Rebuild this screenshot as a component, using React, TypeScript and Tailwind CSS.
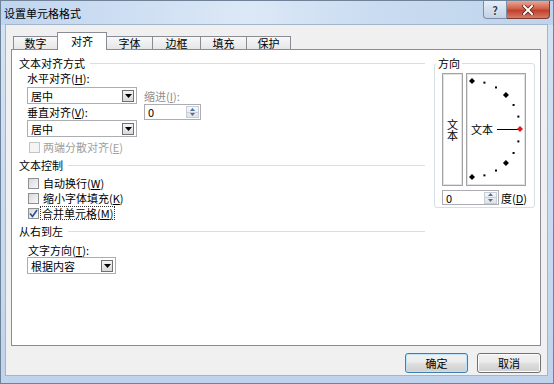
import React from "react";

const FONT = "font-['Noto_Sans_CJK_SC','Noto_Sans',sans-serif]";

function U({ c }: { c: string }) {
  return <span className="underline decoration-1 underline-offset-[1px]">{c}</span>;
}

function DropBtn() {
  return (
    <div className="mr-[2px] flex h-[12px] w-[12px] items-center justify-center border border-[#707070] bg-[linear-gradient(#f4f4f4,#d9d9d9)]">
      <svg width="7" height="4" viewBox="0 0 7 4">
        <path d="M0 0H7L3.5 4Z" fill="#000" />
      </svg>
    </div>
  );
}

function Combo({ text, cls }: { text: string; cls: string }) {
  return (
    <div className={`flex h-[17px] items-center border border-[#abadb3] bg-white ${cls}`}>
      <span className="flex-1 pl-[3px] text-[11px] leading-[14px] text-black">{text}</span>
      <DropBtn />
    </div>
  );
}

function SpinBtns() {
  return (
    <div className="mr-[1px] flex h-[12px] w-[13px] flex-col border border-[#c9ced6] bg-[linear-gradient(#f6f7f9,#dfe3e8)]">
      <div className="flex flex-1 items-center justify-center border-b border-[#c9ced6]">
        <svg width="5" height="3" viewBox="0 0 5 3">
          <path d="M0 3H5L2.5 0Z" fill="#4f6f9f" />
        </svg>
      </div>
      <div className="flex flex-1 items-center justify-center">
        <svg width="5" height="3" viewBox="0 0 5 3">
          <path d="M0 0H5L2.5 3Z" fill="#4f6f9f" />
        </svg>
      </div>
    </div>
  );
}

function Spin({ cls, h }: { cls: string; h: string }) {
  return (
    <div className={`flex items-center border border-[#abadb3] bg-white ${cls} ${h}`}>
      <span className="flex-1 pl-[3px] text-[11px] leading-[14px] text-black">0</span>
      <SpinBtns />
    </div>
  );
}

function Box({ checked, disabled }: { checked?: boolean; disabled?: boolean }) {
  return (
    <div
      className={`flex h-[11px] w-[11px] items-center justify-center border ${
        disabled
          ? "border-[#c4c4c4] bg-[#f4f4f4]"
          : "border-[#8e8f8f] bg-[linear-gradient(135deg,#d6d9de,#f9f9f9)]"
      }`}
    >
      {checked && (
        <svg width="9" height="9" viewBox="0 0 9 9">
          <path d="M1 4.5L3.5 7.5L8 1" stroke="#2b4f8e" strokeWidth="1.6" fill="none" />
        </svg>
      )}
    </div>
  );
}

function Header({ text, mt }: { text: string; mt: string }) {
  return (
    <div className={`flex h-[14px] items-center ${mt}`}>
      <span className="text-[11px] leading-[14px] text-black">{text}</span>
      <div className="ml-[5px] mt-[1px] h-px flex-1 bg-[#d5dfe5]" />
    </div>
  );
}

function Semicircle() {
  const els: React.ReactNode[] = [];
  for (let a = -90; a <= 90; a += 15) {
    const r = (a * Math.PI) / 180;
    const x = 5 + 48 * Math.cos(r);
    const y = 55 - 48 * Math.sin(r);
    const big = a % 45 === 0;
    if (big) {
      els.push(
        <polygon
          key={a}
          points={`${x},${y - 3} ${x + 3},${y} ${x},${y + 3} ${x - 3},${y}`}
          fill={a === 0 ? "#e01818" : "#000"}
        />
      );
    } else {
      els.push(<rect key={a} x={x - 1} y={y - 1} width="2" height="2" fill="#000" />);
    }
  }
  return (
    <svg className="absolute left-0 top-0" width="58" height="111" viewBox="0 0 58 111">
      <line x1="30" y1="55.5" x2="51" y2="55.5" stroke="#000" strokeWidth="1" />
      {els}
    </svg>
  );
}

export default function App() {
  const tabs = [
    { t: "数字", w: "w-[44px]" },
    { t: "对齐", w: "w-[50px]", sel: true },
    { t: "字体", w: "w-[45px]" },
    { t: "边框", w: "w-[48px]" },
    { t: "填充", w: "w-[46px]" },
    { t: "保护", w: "w-[45px]", last: true },
  ];

  return (
    <div
      className={`flex h-[384px] w-[554px] flex-col border border-[#6f8298] bg-[linear-gradient(to_bottom,#d4e4f6,#bfd4ec)] ${FONT} text-black`}
    >
      {/* Title bar */}
      <div className="flex h-[24px] items-start justify-between bg-[linear-gradient(to_right,#c0d5ee,#dbe8f7_45%,#c8dbf0_70%,#bfd4ec)]">
        <span className="ml-[3px] mt-[5px] text-[11px] leading-[14px] text-black">设置单元格格式</span>
        <div className="mr-[3px] flex">
          <div className="flex h-[18px] w-[24px] items-center justify-center rounded-bl-[4px] border border-t-0 border-[#7c8ea6] bg-[linear-gradient(#e6edf6,#c3d2e4)]">
            <span className="text-[11px] font-bold leading-[12px] text-[#33445c] [text-shadow:0_0_2px_#fff]">?</span>
          </div>
          <div className="flex h-[18px] w-[43px] items-center justify-center rounded-br-[4px] border border-l-0 border-t-0 border-[#7a3a30] bg-[linear-gradient(#e9a896,#d0604a_45%,#c0402c_55%,#d77c66)]">
            <svg width="12" height="10" viewBox="0 0 12 10">
              <path d="M2 1L10 9M10 1L2 9" stroke="#5a2018" strokeWidth="3.6" strokeLinecap="square" />
              <path d="M2 1L10 9M10 1L2 9" stroke="#fff" strokeWidth="2" strokeLinecap="square" />
            </svg>
          </div>
        </div>
      </div>

      {/* Client area */}
      <div className="ml-[5px] flex h-[350px] w-[541px] flex-col bg-[#f0f0f0] pt-[7px] shadow-[0_0_0_1px_#a2b5ca]">
        {/* Tabs */}
        <div className="relative z-10 flex h-[17px] items-end pl-[7px]">
          {tabs.map((tb) =>
            tb.sel ? (
              <div
                key={tb.t}
                className={`${tb.w} -mb-px flex h-[18px] items-center justify-center border border-b-0 border-[#898c95] bg-white pb-[1px]`}
              >
                <span className="text-[11px] leading-[14px]">{tb.t}</span>
              </div>
            ) : (
              <div
                key={tb.t}
                className={`${tb.w} flex h-[13px] items-center justify-center border-t border-[#898c95] bg-[linear-gradient(#f8f8f8,#e6e6e6)] ${
                  tb.t === "数字" ? "border-l" : ""
                } ${tb.t === "字体" ? "" : tb.t !== "数字" ? "border-l" : ""} ${tb.last ? "border-r" : ""}`}
              >
                <span className="text-[11px] leading-[13px]">{tb.t}</span>
              </div>
            )
          )}
        </div>

        {/* Panel */}
        <div className="ml-[5px] flex h-[297px] w-[530px] items-start border border-[#898c95] bg-white pl-[7px]">
          {/* Left column */}
          <div className="flex w-[406px] flex-col">
            <Header text="文本对齐方式" mt="mt-[6px]" />
            <div className="ml-[8px] mt-[1px] h-[14px] text-[11px] leading-[14px]">
              水平对齐(<U c="H" />):
            </div>
            <div className="ml-[8px] mt-[2px] flex">
              <div className="flex flex-col">
                <Combo text="居中" cls="w-[110px]" />
                <div className="mt-[1px] h-[14px] text-[11px] leading-[14px]">
                  垂直对齐(<U c="V" />):
                </div>
                <Combo text="居中" cls="mt-[1px] w-[110px]" />
              </div>
              <div className="ml-[7px] flex flex-col">
                <div className="mt-[2px] h-[14px] text-[11px] leading-[14px] text-[#8d8d8d]">
                  缩进(<U c="I" />):
                </div>
                <Spin cls="mt-[1px] w-[57px]" h="h-[16px]" />
              </div>
            </div>
            <div className="ml-[10px] mt-[3px] flex h-[14px] items-center">
              <Box disabled />
              <span className="ml-[3px] text-[11px] leading-[14px] text-[#a0a0a0]">
                两端分散对齐(<U c="E" />)
              </span>
            </div>

            <Header text="文本控制" mt="mt-[4px]" />
            <div className="ml-[9px] mt-[4px] flex h-[14px] items-center">
              <Box />
              <span className="ml-[4px] text-[11px] leading-[14px]">
                自动换行(<U c="W" />)
              </span>
            </div>
            <div className="ml-[9px] mt-[1px] flex h-[14px] items-center">
              <Box />
              <span className="ml-[4px] text-[11px] leading-[14px]">
                缩小字体填充(<U c="K" />)
              </span>
            </div>
            <div className="ml-[9px] mt-[1px] flex h-[14px] items-center">
              <Box checked />
              <span className="ml-[1px] border border-dotted border-[#333] px-[1px] text-[11px] leading-[12px]">
                合并单元格(<U c="M" />)
              </span>
            </div>

            <Header text="从右到左" mt="mt-[4px]" />
            <div className="ml-[9px] mt-[5px] h-[14px] text-[11px] leading-[14px]">
              文字方向(<U c="T" />):
            </div>
            <Combo text="根据内容" cls="ml-[8px] w-[89px]" />
          </div>

          {/* Right column: direction */}
          <div className="relative ml-[9px] mt-[13px] flex h-[145px] w-[101px] flex-col rounded-[3px] border border-[#d5dfe5] pl-[7px] pt-[9px]">
            <span className="absolute -top-[8px] left-[1px] bg-white px-[2px] text-[11px] leading-[14px]">
              方向
            </span>
            <div className="flex">
              <div className="flex h-[113px] w-[21px] items-center justify-center border border-[#a3a3a3] shadow-[inset_0_0_0_1px_#e2e2e2]">
                <span className="text-[11px] leading-[14px] [writing-mode:vertical-rl]">文本</span>
              </div>
              <div className="relative ml-[3px] h-[113px] w-[60px] border border-[#a3a3a3] shadow-[inset_0_0_0_1px_#e2e2e2]">
                <Semicircle />
                <span className="absolute left-[4px] top-[48px] text-[11px] leading-[14px]">文本</span>
              </div>
            </div>
            <div className="mt-[4px] flex items-center">
              <Spin cls="w-[57px]" h="h-[15px]" />
              <span className="ml-[2px] text-[11px] leading-[14px]">
                度(<U c="D" />)
              </span>
            </div>
          </div>
        </div>

        {/* Buttons */}
        <div className="mt-[7px] flex justify-end gap-[9px] pr-[6px]">
          <div className="flex h-[20px] w-[63px] items-center justify-center rounded-[3px] border border-[#3c7fb1] bg-[linear-gradient(#f2f2f2,#ebebeb_45%,#dddddd_55%,#cfcfcf)] shadow-[inset_0_0_0_1px_#bfe3fb]">
            <span className="text-[11px] leading-[14px]">确定</span>
          </div>
          <div className="flex h-[20px] w-[64px] items-center justify-center rounded-[3px] border border-[#707070] bg-[linear-gradient(#f2f2f2,#ebebeb_45%,#dddddd_55%,#cfcfcf)] shadow-[inset_0_0_0_1px_#fcfcfc]">
            <span className="text-[11px] leading-[14px]">取消</span>
          </div>
        </div>
      </div>
    </div>
  );
}
